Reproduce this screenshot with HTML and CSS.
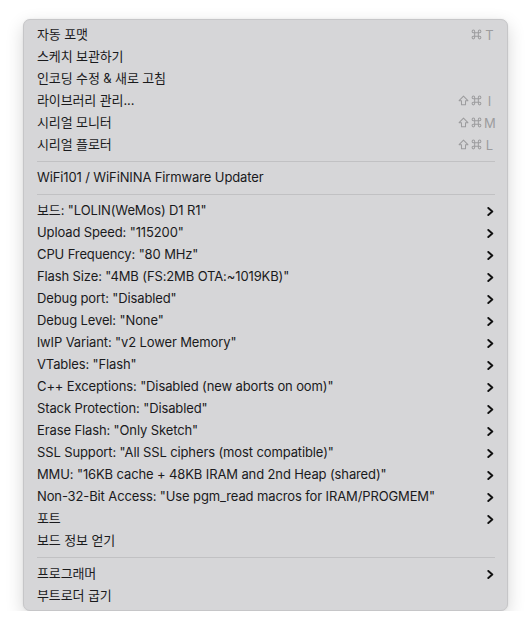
FILE: index.html
```html
<!DOCTYPE html>
<html lang="ko">
<head>
<meta charset="utf-8">
<link rel="stylesheet" href="styles.css">
</head>
<body>
<div class="menu">
  <div class="item"><span class="label">자동 포맷</span><span class="sc"><svg class="cmd" viewBox="0 0 12 12"><path d="M4 4h4v4H4zM4 4V2.6A1.4 1.4 0 1 0 2.6 4H4M8 4V2.6A1.4 1.4 0 1 1 9.4 4H8M4 8v1.4A1.4 1.4 0 1 1 2.6 8H4M8 8v1.4A1.4 1.4 0 1 0 9.4 8H8"/></svg><span class="key">T</span></span></div>
  <div class="item"><span class="label">스케치 보관하기</span></div>
  <div class="item"><span class="label">인코딩 수정 &amp; 새로 고침</span></div>
  <div class="item"><span class="label">라이브러리 관리...</span><span class="sc"><svg class="shift" viewBox="0 0 12 12"><path d="M6 1.2L1.2 6.2h2.6v4.4h4.4V6.2h2.6z"/></svg><svg class="cmd" viewBox="0 0 12 12"><path d="M4 4h4v4H4zM4 4V2.6A1.4 1.4 0 1 0 2.6 4H4M8 4V2.6A1.4 1.4 0 1 1 9.4 4H8M4 8v1.4A1.4 1.4 0 1 1 2.6 8H4M8 8v1.4A1.4 1.4 0 1 0 9.4 8H8"/></svg><span class="key">I</span></span></div>
  <div class="item"><span class="label">시리얼 모니터</span><span class="sc"><svg class="shift" viewBox="0 0 12 12"><path d="M6 1.2L1.2 6.2h2.6v4.4h4.4V6.2h2.6z"/></svg><svg class="cmd" viewBox="0 0 12 12"><path d="M4 4h4v4H4zM4 4V2.6A1.4 1.4 0 1 0 2.6 4H4M8 4V2.6A1.4 1.4 0 1 1 9.4 4H8M4 8v1.4A1.4 1.4 0 1 1 2.6 8H4M8 8v1.4A1.4 1.4 0 1 0 9.4 8H8"/></svg><span class="key">M</span></span></div>
  <div class="item"><span class="label">시리얼 플로터</span><span class="sc"><svg class="shift" viewBox="0 0 12 12"><path d="M6 1.2L1.2 6.2h2.6v4.4h4.4V6.2h2.6z"/></svg><svg class="cmd" viewBox="0 0 12 12"><path d="M4 4h4v4H4zM4 4V2.6A1.4 1.4 0 1 0 2.6 4H4M8 4V2.6A1.4 1.4 0 1 1 9.4 4H8M4 8v1.4A1.4 1.4 0 1 1 2.6 8H4M8 8v1.4A1.4 1.4 0 1 0 9.4 8H8"/></svg><span class="key">L</span></span></div>
  <div class="sep"></div>
  <div class="item"><span class="label">WiFi101 / WiFiNINA Firmware Updater</span></div>
  <div class="sep"></div>
  <div class="item"><span class="label">보드: "LOLIN(WeMos) D1 R1"</span><svg class="chev" viewBox="0 0 7 9"><polyline points="1.3,1 5.3,4.5 1.3,8"/></svg></div>
  <div class="item"><span class="label">Upload Speed: "115200"</span><svg class="chev" viewBox="0 0 7 9"><polyline points="1.3,1 5.3,4.5 1.3,8"/></svg></div>
  <div class="item"><span class="label">CPU Frequency: "80 MHz"</span><svg class="chev" viewBox="0 0 7 9"><polyline points="1.3,1 5.3,4.5 1.3,8"/></svg></div>
  <div class="item"><span class="label">Flash Size: "4MB (FS:2MB OTA:~1019KB)"</span><svg class="chev" viewBox="0 0 7 9"><polyline points="1.3,1 5.3,4.5 1.3,8"/></svg></div>
  <div class="item"><span class="label">Debug port: "Disabled"</span><svg class="chev" viewBox="0 0 7 9"><polyline points="1.3,1 5.3,4.5 1.3,8"/></svg></div>
  <div class="item"><span class="label">Debug Level: "None"</span><svg class="chev" viewBox="0 0 7 9"><polyline points="1.3,1 5.3,4.5 1.3,8"/></svg></div>
  <div class="item"><span class="label">lwIP Variant: "v2 Lower Memory"</span><svg class="chev" viewBox="0 0 7 9"><polyline points="1.3,1 5.3,4.5 1.3,8"/></svg></div>
  <div class="item"><span class="label">VTables: "Flash"</span><svg class="chev" viewBox="0 0 7 9"><polyline points="1.3,1 5.3,4.5 1.3,8"/></svg></div>
  <div class="item"><span class="label">C++ Exceptions: "Disabled (new aborts on oom)"</span><svg class="chev" viewBox="0 0 7 9"><polyline points="1.3,1 5.3,4.5 1.3,8"/></svg></div>
  <div class="item"><span class="label">Stack Protection: "Disabled"</span><svg class="chev" viewBox="0 0 7 9"><polyline points="1.3,1 5.3,4.5 1.3,8"/></svg></div>
  <div class="item"><span class="label">Erase Flash: "Only Sketch"</span><svg class="chev" viewBox="0 0 7 9"><polyline points="1.3,1 5.3,4.5 1.3,8"/></svg></div>
  <div class="item"><span class="label">SSL Support: "All SSL ciphers (most compatible)"</span><svg class="chev" viewBox="0 0 7 9"><polyline points="1.3,1 5.3,4.5 1.3,8"/></svg></div>
  <div class="item"><span class="label">MMU: "16KB cache + 48KB IRAM and 2nd Heap (shared)"</span><svg class="chev" viewBox="0 0 7 9"><polyline points="1.3,1 5.3,4.5 1.3,8"/></svg></div>
  <div class="item"><span class="label">Non-32-Bit Access: "Use pgm_read macros for IRAM/PROGMEM"</span><svg class="chev" viewBox="0 0 7 9"><polyline points="1.3,1 5.3,4.5 1.3,8"/></svg></div>
  <div class="item"><span class="label">포트</span><svg class="chev" viewBox="0 0 7 9"><polyline points="1.3,1 5.3,4.5 1.3,8"/></svg></div>
  <div class="item"><span class="label">보드 정보 얻기</span></div>
  <div class="sep"></div>
  <div class="item"><span class="label">프로그래머</span><svg class="chev" viewBox="0 0 7 9"><polyline points="1.3,1 5.3,4.5 1.3,8"/></svg></div>
  <div class="item"><span class="label">부트로더 굽기</span></div>
</div>
</body>
</html>
```
FILE: styles.css
```css
html, body {
  margin: 0;
  padding: 0;
  background: #ffffff;
}
body {
  padding: 19px 0 0 23px;
  font-family: Inter, "Noto Sans CJK KR", sans-serif;
  font-size: 13px;
  color: #1a1a1c;
}
.menu {
  width: 485px;
  height: 592px;
  box-sizing: border-box;
  background: #d6d6d8;
  border: 1px solid #c6c6c8;
  border-radius: 7px;
  box-shadow: 0 6px 18px rgba(0, 0, 0, 0.16), 0 0 2px rgba(0, 0, 0, 0.08);
  padding: 4px 12px 3px 13px;
  display: flex;
  flex-direction: column;
}
.item {
  height: 22px;
  display: flex;
  align-items: center;
  justify-content: space-between;
  white-space: nowrap;
}
.label {
  flex: 1;
  line-height: 20px;
  padding-bottom: 2px;
  letter-spacing: -0.12px;
}
.sep {
  height: 11px;
  display: flex;
  align-items: center;
}
.sep::before {
  content: "";
  display: block;
  width: 100%;
  height: 1px;
  background: #c1c1c3;
}
.sc {
  display: flex;
  align-items: center;
  gap: 2px;
  color: #9c9c9e;
  padding-bottom: 1px;
}
.shift,
.cmd {
  width: 11px;
  height: 11px;
  fill: none;
  stroke: #9c9c9e;
  stroke-width: 1.1;
  stroke-linejoin: round;
}
.key {
  width: 11px;
  text-align: center;
  font-size: 13px;
  line-height: 20px;
}
.chev {
  width: 7px;
  height: 9px;
  margin-right: 1px;
  fill: none;
  stroke: #111;
  stroke-width: 1.9;
  stroke-linecap: round;
  stroke-linejoin: round;
}
```
